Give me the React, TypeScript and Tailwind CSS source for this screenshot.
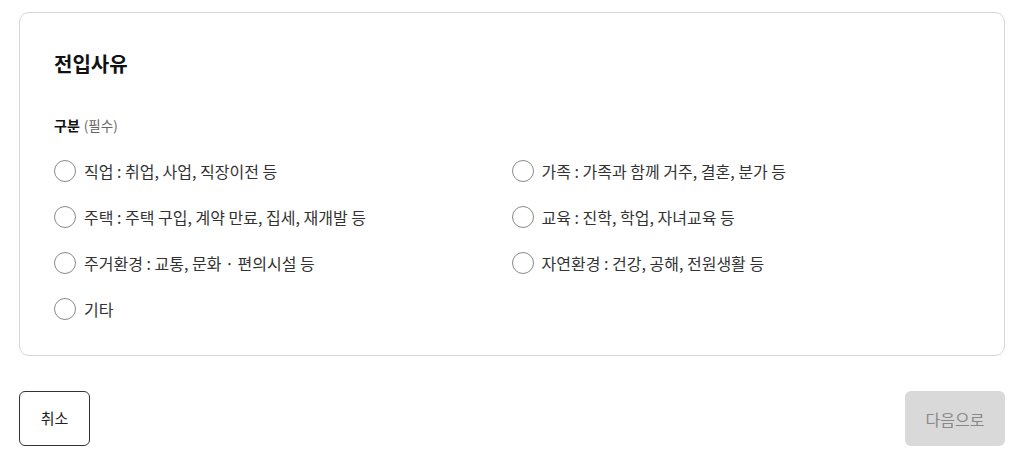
import React, { useState } from 'react';

const reasons = [
  '직업 : 취업, 사업, 직장이전 등',
  '가족 : 가족과 함께 거주, 결혼, 분가 등',
  '주택 : 주택 구입, 계약 만료, 집세, 재개발 등',
  '교육 : 진학, 학업, 자녀교육 등',
  '주거환경 : 교통, 문화 · 편의시설 등',
  '자연환경 : 건강, 공해, 전원생활 등',
  '기타',
];

export default function App() {
  const [selected, setSelected] = useState<number | null>(null);

  return (
    <main className="min-h-screen bg-white px-[19px] pt-[12px] text-[#222]" style={{ fontFamily: '"Noto Sans CJK KR", "Noto Sans", sans-serif' }}>
      <section className="border border-[#d6d6d6] rounded-[10px] pl-[34px] pr-[35px] pt-[36px] pb-[23px]">
        <h2 className="text-[20px] font-bold leading-[30px] text-[#111]">전입사유</h2>
        <div className="mt-[36px] flex items-center gap-1 leading-5">
          <span className="text-[14px] font-bold text-[#111]">구분</span>
          <span className="text-[13.5px] text-[#666]">(필수)</span>
        </div>
        <div className="grid grid-cols-2 mt-[13px]">
          {reasons.map((r, i) => (
            <label key={i} className="flex items-center h-[46px] cursor-pointer" onClick={() => setSelected(i)}>
              <span className="w-[22px] h-[22px] rounded-full border-[1.5px] border-[#8a8a8a] flex items-center justify-center shrink-0">
                {selected === i && <span className="w-[12px] h-[12px] rounded-full bg-[#333]"></span>}
              </span>
              <span className="ml-[8px] text-[16px] text-[#333]">{r}</span>
            </label>
          ))}
        </div>
      </section>
      <div className="flex justify-between mt-[35px]">
        <button className="w-[71px] h-[55px] border border-[#333] rounded-[6px] text-[15px] text-[#222] bg-white">취소</button>
        <button disabled className="w-[100px] h-[55px] rounded-[6px] text-[16px] text-[#888] bg-[#d9d9d9]">다음으로</button>
      </div>
    </main>
  );
}
